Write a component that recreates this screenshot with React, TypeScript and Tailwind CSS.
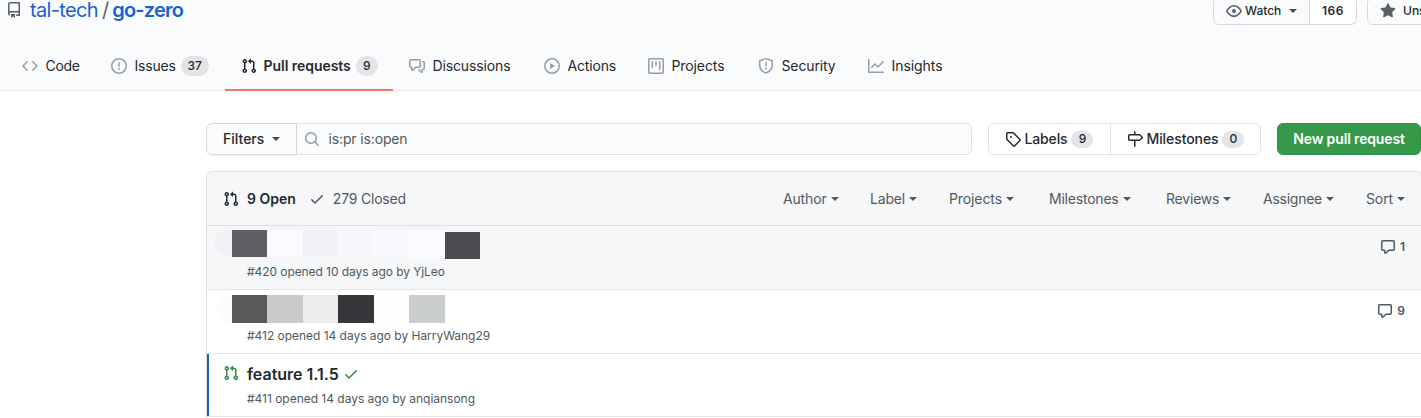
import type { ReactNode } from "react";

const icons = {
  repo: "M2 2.5A2.5 2.5 0 014.5 0h8.75a.75.75 0 01.75.75v12.5a.75.75 0 01-.75.75h-2.5a.75.75 0 110-1.5h1.75v-2h-8a1 1 0 00-.714 1.7.75.75 0 01-1.072 1.05A2.495 2.495 0 012 11.5v-9zm10.5-1V9h-8c-.356 0-.694.074-1 .208V2.5a1 1 0 011-1h8zM5 12.25v3.25a.25.25 0 00.4.2l1.45-1.087a.25.25 0 01.3 0L8.6 15.7a.25.25 0 00.4-.2v-3.25a.25.25 0 00-.25-.25h-3.5a.25.25 0 00-.25.25z",
  code: "M4.72 3.22a.75.75 0 011.06 1.06L2.06 8l3.72 3.72a.75.75 0 11-1.06 1.06L.47 8.53a.75.75 0 010-1.06l4.25-4.25zm6.56 0a.75.75 0 10-1.06 1.06L13.94 8l-3.72 3.72a.75.75 0 101.06 1.06l4.25-4.25a.75.75 0 000-1.06l-4.25-4.25z",
  issue: "M8 1.5a6.5 6.5 0 100 13 6.5 6.5 0 000-13zM0 8a8 8 0 1116 0A8 8 0 010 8zm9 3a1 1 0 11-2 0 1 1 0 012 0zm-.25-6.25a.75.75 0 00-1.5 0v3.5a.75.75 0 001.5 0v-3.5z",
  pull: "M7.177 3.073L9.573.677A.25.25 0 0110 .854v4.792a.25.25 0 01-.427.177L7.177 3.427a.25.25 0 010-.354zM3.75 2.5a.75.75 0 100 1.5.75.75 0 000-1.5zm-2.25.75a2.25 2.25 0 113 2.122v5.256a2.251 2.251 0 11-1.5 0V5.372A2.25 2.25 0 011.5 3.25zM11 2.5h-1V4h1a1 1 0 011 1v5.628a2.251 2.251 0 101.5 0V5A2.5 2.5 0 0011 2.5zm1 10.25a.75.75 0 111.5 0 .75.75 0 01-1.5 0zM3.75 12a.75.75 0 100 1.5.75.75 0 000-1.5z",
  discussion: "M1.5 2.75a.25.25 0 01.25-.25h8.5a.25.25 0 01.25.25v5.5a.25.25 0 01-.25.25h-3.5a.75.75 0 00-.53.22L3.5 11.44V9.25a.75.75 0 00-.75-.75h-1a.25.25 0 01-.25-.25v-5.5zM1.75 1A1.75 1.75 0 000 2.75v5.5C0 9.216.784 10 1.75 10H2v1.543a1.457 1.457 0 002.487 1.03L7.061 10h3.189A1.75 1.75 0 0012 8.25v-5.5A1.75 1.75 0 0010.25 1h-8.5zM14.5 4.75a.25.25 0 00-.25-.25h-.5a.75.75 0 110-1.5h.5c.966 0 1.75.784 1.75 1.75v5.5A1.75 1.75 0 0114.25 12H14v1.543a1.457 1.457 0 01-2.487 1.03L9.22 12.28a.75.75 0 111.06-1.06l2.22 2.22v-2.19a.75.75 0 01.75-.75h1a.25.25 0 00.25-.25v-5.5z",
  play: "M1.5 8a6.5 6.5 0 1113 0 6.5 6.5 0 01-13 0zM8 0a8 8 0 100 16A8 8 0 008 0zM6.379 5.227A.25.25 0 006 5.442v5.117a.25.25 0 00.379.214l4.264-2.559a.25.25 0 000-.428L6.379 5.227z",
  project: "M1.75 0A1.75 1.75 0 000 1.75v12.5C0 15.216.784 16 1.75 16h12.5A1.75 1.75 0 0016 14.25V1.75A1.75 1.75 0 0014.25 0H1.75zM1.5 1.75a.25.25 0 01.25-.25h12.5a.25.25 0 01.25.25v12.5a.25.25 0 01-.25.25H1.75a.25.25 0 01-.25-.25V1.75zM11.75 3a.75.75 0 00-.75.75v7.5a.75.75 0 001.5 0v-7.5a.75.75 0 00-.75-.75zm-8.25.75a.75.75 0 011.5 0v5.5a.75.75 0 01-1.5 0v-5.5zM8 3a.75.75 0 00-.75.75v3.5a.75.75 0 001.5 0v-3.5A.75.75 0 008 3z",
  shield: "M7.467.133a1.75 1.75 0 011.066 0l5.25 1.68A1.75 1.75 0 0115 3.48V7c0 1.566-.32 3.182-1.303 4.682-.983 1.498-2.585 2.813-5.032 3.855a1.7 1.7 0 01-1.33 0c-2.447-1.042-4.049-2.357-5.032-3.855C1.32 10.182 1 8.566 1 7V3.48a1.75 1.75 0 011.217-1.667l5.25-1.68zm.61 1.429a.25.25 0 00-.153 0l-5.25 1.68a.25.25 0 00-.174.238V7c0 1.358.275 2.666 1.057 3.86.784 1.194 2.121 2.34 4.366 3.297a.2.2 0 00.154 0c2.245-.956 3.582-2.104 4.366-3.298C13.225 9.666 13.5 8.36 13.5 7V3.48a.25.25 0 00-.174-.237l-5.25-1.68zM9 10.5a1 1 0 11-2 0 1 1 0 012 0zm-.25-5.75a.75.75 0 10-1.5 0v3a.75.75 0 001.5 0v-3z",
  graph: "M1.5 1.75a.75.75 0 00-1.5 0v12.5c0 .414.336.75.75.75h14.5a.75.75 0 000-1.5H1.5V1.75zm14.28 2.53a.75.75 0 00-1.06-1.06L10 7.94 7.53 5.47a.75.75 0 00-1.06 0L3.22 8.72a.75.75 0 001.06 1.06L7 7.06l2.47 2.47a.75.75 0 001.06 0l5.25-5.25z",
  eye: "M1.679 7.932c.412-.621 1.242-1.75 2.366-2.717C5.175 4.242 6.527 3.5 8 3.5c1.473 0 2.824.742 3.955 1.715 1.124.967 1.954 2.096 2.366 2.717a.119.119 0 010 .136c-.412.621-1.242 1.75-2.366 2.717C10.825 11.758 9.473 12.5 8 12.5c-1.473 0-2.824-.742-3.955-1.715C2.92 9.818 2.09 8.69 1.679 8.068a.119.119 0 010-.136zM8 2c-1.981 0-3.67.992-4.933 2.078C1.797 5.169.88 6.423.43 7.1a1.619 1.619 0 000 1.798c.45.678 1.367 1.932 2.637 3.024C4.329 13.008 6.019 14 8 14c1.981 0 3.67-.992 4.933-2.078 1.27-1.091 2.187-2.345 2.637-3.023a1.619 1.619 0 000-1.798c-.45-.678-1.367-1.932-2.637-3.023C11.671 2.992 9.981 2 8 2zm0 8a2 2 0 100-4 2 2 0 000 4z",
  star: "M8 .25a.75.75 0 01.673.418l1.882 3.815 4.21.612a.75.75 0 01.416 1.279l-3.046 2.97.719 4.192a.75.75 0 01-1.088.791L8 12.347l-3.766 1.98a.75.75 0 01-1.088-.79l.72-4.194L.818 6.374a.75.75 0 01.416-1.28l4.21-.611L7.327.668A.75.75 0 018 .25z",
  search: "M11.5 7a4.499 4.499 0 11-8.998 0A4.499 4.499 0 0111.5 7zm-.82 4.74a6 6 0 111.06-1.06l3.04 3.04a.75.75 0 11-1.06 1.06l-3.04-3.04z",
  tag: "M2.5 7.775V2.75a.25.25 0 01.25-.25h5.025a.25.25 0 01.177.073l6.25 6.25a.25.25 0 010 .354l-5.025 5.025a.25.25 0 01-.354 0l-6.25-6.25a.25.25 0 01-.073-.177zm-1.5 0V2.75C1 1.784 1.784 1 2.75 1h5.025c.464 0 .91.184 1.238.513l6.25 6.25a1.75 1.75 0 010 2.474l-5.026 5.026a1.75 1.75 0 01-2.474 0l-6.25-6.25A1.75 1.75 0 011 7.775zM6 5a1 1 0 100 2 1 1 0 000-2z",
  milestone: "M7.75 0a.75.75 0 01.75.75V3h3.634c.414 0 .814.147 1.13.414l2.07 1.75a1.75 1.75 0 010 2.672l-2.07 1.75a1.75 1.75 0 01-1.13.414H8.5v5.25a.75.75 0 11-1.5 0V10H2.75A1.75 1.75 0 011 8.25v-3.5C1 3.784 1.784 3 2.75 3H7V.75A.75.75 0 017.75 0zm0 8.5h4.384a.25.25 0 00.161-.06l2.07-1.75a.25.25 0 000-.38l-2.07-1.75a.25.25 0 00-.161-.06H2.75a.25.25 0 00-.25.25v3.5c0 .138.112.25.25.25h5z",
  check: "M13.78 4.22a.75.75 0 010 1.06l-7.25 7.25a.75.75 0 01-1.06 0L2.22 9.28a.75.75 0 011.06-1.06L6 10.94l6.72-6.72a.75.75 0 011.06 0z",
  comment: "M2.75 2.5a.25.25 0 00-.25.25v7.5c0 .138.112.25.25.25h2a.75.75 0 01.75.75v2.19l2.72-2.72a.75.75 0 01.53-.22h4.5a.25.25 0 00.25-.25v-7.5a.25.25 0 00-.25-.25H2.75zM1 2.75C1 1.784 1.784 1 2.75 1h10.5c.966 0 1.75.784 1.75 1.75v7.5A1.75 1.75 0 0113.25 12H9.06l-2.573 2.573A1.457 1.457 0 014 13.543V12H2.75A1.75 1.75 0 011 10.25v-7.5z",
};

function Icon({ name, className = "" }: { name: keyof typeof icons; className?: string }) {
  return (
    <svg viewBox="0 0 16 16" className={`size-4 shrink-0 fill-current ${className}`}>
      <path fillRule="evenodd" d={icons[name]} />
    </svg>
  );
}

function Caret({ className = "" }: { className?: string }) {
  return <span className={`inline-block size-0 border-x-4 border-t-4 border-x-transparent border-t-current ${className}`} />;
}

function Counter({ children, className = "" }: { children: ReactNode; className?: string }) {
  return (
    <span className={`flex items-center justify-center rounded-full bg-[#e2e4e7] text-xs font-medium text-[#24292e] ${className}`}>
      {children}
    </span>
  );
}

const tabs: { icon: keyof typeof icons; label: string; width: string; tracking: string; count?: string; countWidth?: string; active?: boolean }[] = [
  { icon: "code", label: "Code", width: "w-[89px]", tracking: "tracking-[-0.3px]" },
  { icon: "issue", label: "Issues", width: "w-[130px]", tracking: "tracking-[-0.2px]", count: "37", countWidth: "w-7" },
  { icon: "pull", label: "Pull requests", width: "w-[168px]", tracking: "tracking-[-0.04px]", count: "9", countWidth: "w-[22px]", active: true },
  { icon: "discussion", label: "Discussions", width: "w-[135px]", tracking: "tracking-[-0.13px]" },
  { icon: "play", label: "Actions", width: "w-[104px]", tracking: "tracking-[-0.17px]" },
  { icon: "project", label: "Projects", width: "w-[110px]", tracking: "tracking-[-0.1px]" },
  { icon: "shield", label: "Security", width: "w-[110px]", tracking: "tracking-[-0.13px]" },
  { icon: "graph", label: "Insights", width: "w-[110px]", tracking: "tracking-[-0.06px]" },
];

const filters = [
  { label: "Author", width: "w-[87px]", tracking: "tracking-[-0.16px]" },
  { label: "Label", width: "w-[79px]", tracking: "tracking-[-0.18px]" },
  { label: "Projects", width: "w-[100px]", tracking: "tracking-[-0.1px]" },
  { label: "Milestones", width: "w-[117px]", tracking: "tracking-[-0.21px]" },
  { label: "Reviews", width: "w-[97px]", tracking: "tracking-[-0.2px]" },
  { label: "Assignee", width: "w-[103px]", tracking: "tracking-[-0.25px]" },
  { label: "Sort", width: "w-[55px]", tracking: "tracking-[-0.11px]" },
];

function Header() {
  return (
    <header className="flex h-[91px] flex-col justify-between border-b border-[#e4e6e9] bg-[#fafbfc]">
      <div className="flex h-[42px] items-start justify-between overflow-hidden">
        <h1 className="flex items-center pl-[6px] text-xl leading-5 text-[#1c60cf]">
          <Icon name="repo" className="mr-2 mb-[1px] text-[#586069]" />
          <span className="tracking-[-0.65px]">tal-tech</span>
          <span className="mr-[3px] ml-1 text-[#586069]">/</span>
          <span className="font-semibold tracking-[-0.78px]">go-zero</span>
        </h1>
        <div className="-mt-[3px] flex h-7 w-[208px] text-xs font-medium text-[#24292e]">
          <div className="flex w-[97px] shrink-0 items-center rounded-l-md border border-[#d5d8da] pl-3">
            <Icon name="eye" className="mr-[3px] text-[#586069]" />
            Watch
            <Caret className="ml-2 text-[#444d56]" />
          </div>
          <div className="flex w-[47px] shrink-0 items-center justify-center rounded-r-md border border-l-0 border-[#d5d8da] bg-white font-semibold tracking-[0.5px]">
            166
          </div>
          <div className="ml-[10px] flex w-24 shrink-0 items-center rounded-l-md border border-[#d5d8da] pl-3">
            <Icon name="star" className="mr-[7px] text-[#586069]" />
            Uns
          </div>
        </div>
      </div>
      <nav className="-mb-px flex h-[49px] pl-[6px] text-sm text-[#24292e]">
        {tabs.map((t) => (
          <div
            key={t.label}
            className={`flex shrink-0 items-center border-b-2 pl-4 ${t.width} ${t.active ? "border-[#f37466] font-semibold" : "border-transparent"}`}
          >
            <Icon name={t.icon} className={t.active ? "mr-[6.5px]" : "mr-[7.5px] text-[#959da5]"} />
            <span className={t.tracking}>{t.label}</span>
            {t.count && <Counter className={`ml-[5px] h-5 ${t.countWidth}`}>{t.count}</Counter>}
          </div>
        ))}
      </nav>
    </header>
  );
}

function Toolbar() {
  return (
    <div className="flex h-8 text-sm text-[#24292e]">
      <div className="flex w-[91px] items-center rounded-l-md border border-[#d5d8da] bg-[#fafbfc] pl-4 font-medium shadow-[0_1px_0_rgba(27,31,35,0.04)]">
        Filters
        <Caret className="ml-2 text-[#444d56]" />
      </div>
      <div className="flex w-[675px] items-center rounded-r-md border border-l-0 border-[#dfe2e6] bg-[#fafbfc] pl-[7px] text-[#505962]">
        <Icon name="search" className="mr-[8.5px] text-[#959da5]" />
        <span className="tracking-[-0.14px]">is:pr is:open</span>
      </div>
      <div className="ml-4 flex w-[273px] rounded-md border border-[#dfe2e6] font-medium">
        <div className="flex w-[122px] items-center border-r border-[#dfe2e6] pl-4">
          <Icon name="tag" className="mr-[3.5px]" />
          <span className="tracking-[-0.14px]">Labels</span>
          <Counter className="ml-1 h-[17px] w-[22px]">9</Counter>
        </div>
        <div className="flex items-center pl-4">
          <Icon name="milestone" className="mr-[3.5px]" />
          <span className="tracking-[-0.09px]">Milestones</span>
          <Counter className="ml-1 h-[17px] w-[22px]">0</Counter>
        </div>
      </div>
      <div className="ml-4 flex w-36 items-center justify-center rounded-md border border-[#2f8f45] bg-[#36994a] font-semibold tracking-[-0.15px] whitespace-nowrap text-white">
        New pull request
      </div>
    </div>
  );
}

function Row({ className, children, comments }: { className: string; children: ReactNode; comments?: string }) {
  return (
    <div className={`flex items-start justify-between border-b border-[#e3e5e9] text-xs text-[#505962] ${className}`}>
      <div>{children}</div>
      {comments && (
        <div className="mt-[13px] mr-4 flex items-center gap-1 font-semibold">
          <Icon name="comment" />
          {comments}
        </div>
      )}
    </div>
  );
}

export default function App() {
  return (
    <div className="h-[418px] w-full overflow-hidden bg-white font-['Inter',sans-serif]">
      <Header />
      <main className="mt-8 ml-[206px] w-[1215px]">
        <Toolbar />
        <section className="mt-4 w-[1216px] rounded-t-md border border-b-0 border-[#dcdfe4]">
          <div className="flex h-[54px] items-center justify-between rounded-t-md border-b border-[#dcdfe4] bg-[#f5f7f9] text-sm text-[#505962]">
            <div className="flex items-center pl-4">
              <Icon name="pull" className="mr-2 text-[#24292e]" />
              <span className="font-semibold text-[#24292e]">9 Open</span>
              <Icon name="check" className="mr-2 ml-[13px]" />
              <span className="tracking-[-0.21px]">279 Closed</span>
            </div>
            <div className="flex">
              {filters.map((f) => (
                <div key={f.label} className={`flex items-center ${f.width}`}>
                  <span className={f.tracking}>{f.label}</span>
                  <Caret className="ml-1" />
                </div>
              ))}
            </div>
          </div>

          <Row className="h-16 bg-[#f5f7f9]" comments="1">
            <div className="mt-1 ml-[7px] flex h-7">
              <span className="h-[27px] w-[18px] rounded-l-full bg-[#f2f2f6]" />
              <span className="h-[27px] w-[35px] bg-[#5f5d62]" />
              <span className="h-[27px] w-9 bg-[#fafbff]" />
              <span className="h-[27px] w-[35px] bg-[#f1f2f6]" />
              <span className="h-[27px] w-9 bg-[#f5f7fb]" />
              <span className="h-[27px] w-[35px] bg-[#f8fafe]" />
              <span className="h-7 w-9 bg-[#f9fbff]" />
              <span className="mt-[1.5px] h-[27px] w-[35px] bg-[#4c4d50]" />
            </div>
            <p className="mt-[6px] ml-10 tracking-[-0.07px]">#420 opened 10 days ago by YjLeo</p>
          </Row>

          <Row className="h-16" comments="9">
            <div className="mt-[5px] ml-[9px] flex h-7">
              <span className="h-7 w-4 rounded-l-full bg-[#fdfbfd]" />
              <span className="h-7 w-[35px] bg-[#58595a]" />
              <span className="h-7 w-9 bg-[#cacaca]" />
              <span className="h-7 w-[35px] bg-[#ededef]" />
              <span className="h-7 w-9 bg-[#38363b]" />
              <span className="h-7 w-[35px] bg-[#fefefe]" />
              <span className="h-7 w-9 bg-[#c9cdcc]" />
            </div>
            <p className="mt-[5px] ml-10 tracking-[-0.03px]">#412 opened 14 days ago by HarryWang29</p>
          </Row>

          <Row className="h-[63px] shadow-[inset_2px_0_0_#1f5fc4]">
            <div className="mt-2 ml-4 flex h-6 items-center">
              <Icon name="pull" className="mr-2 mb-[2px] text-[#2c8a3c]" />
              <span className="text-base font-semibold text-[#24292e]">feature 1.1.5</span>
              <Icon name="check" className="ml-1 text-[#2c8a3c]" />
            </div>
            <p className="mt-[5px] ml-10 tracking-[-0.02px]">#411 opened 14 days ago by anqiansong</p>
          </Row>
        </section>
      </main>
    </div>
  );
}
